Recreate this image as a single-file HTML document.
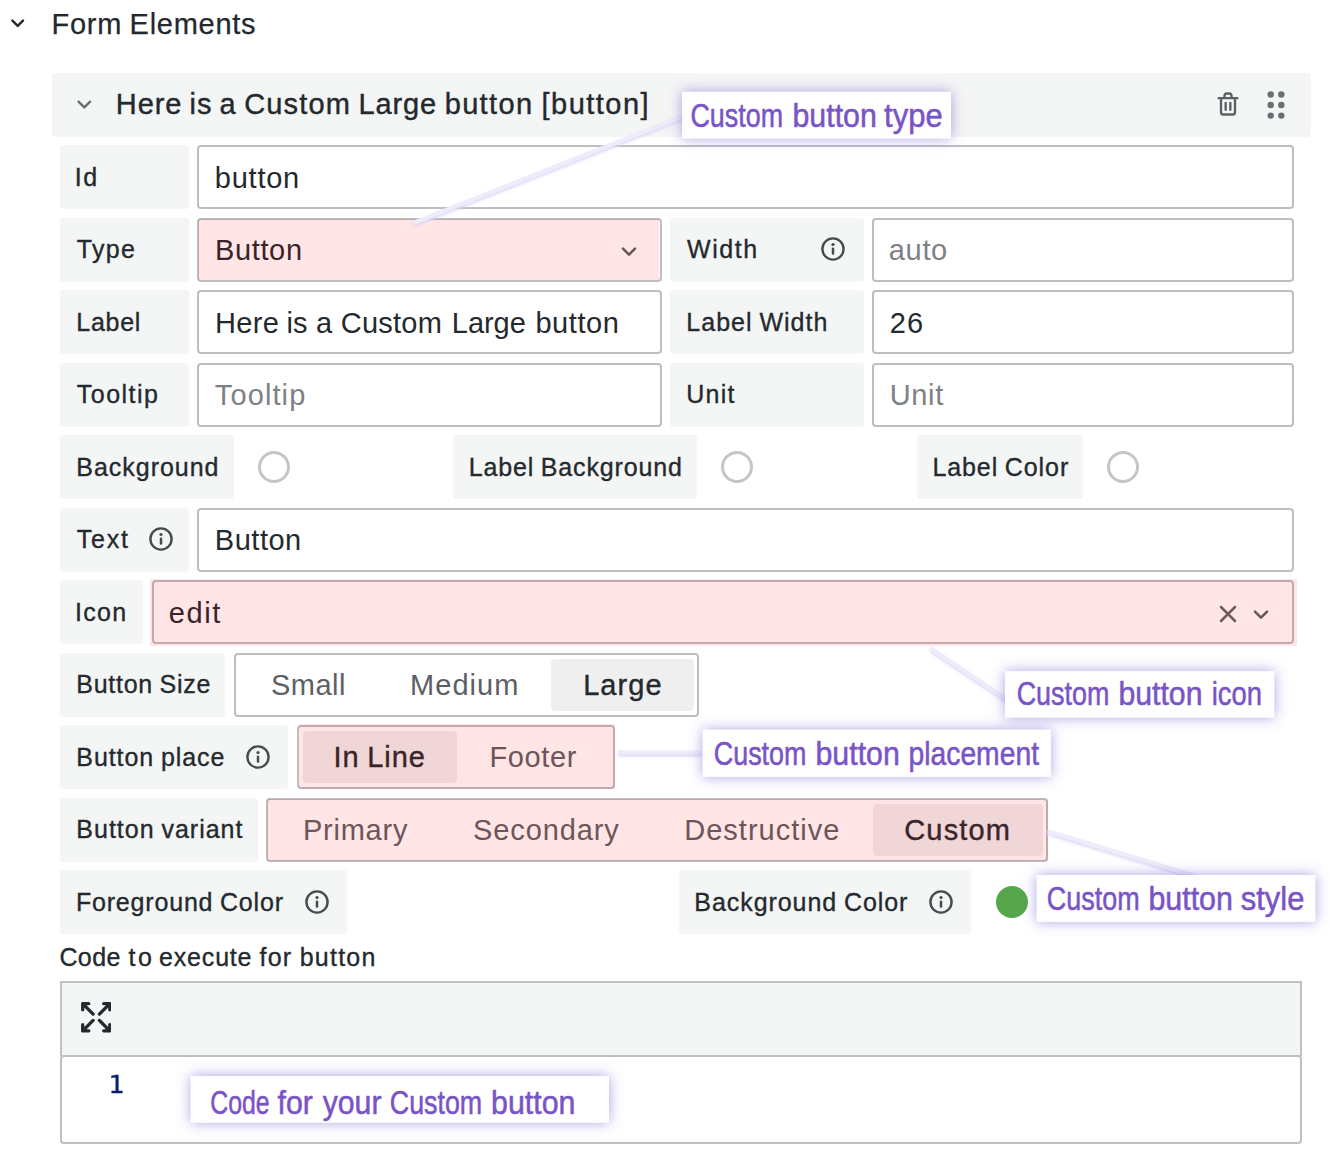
<!DOCTYPE html>
<html lang="en"><head><meta charset="utf-8"><title>Form Elements</title>
<style>
html,body{margin:0;padding:0;background:#fff}
#root{position:relative;width:1330px;height:1152px;overflow:hidden;background:#fff;font-family:'Liberation Sans',sans-serif;color:#24292e}
.abs{position:absolute}
.h1,.h2{font-size:29px;white-space:pre;-webkit-text-stroke:0.25px #24292e}
.h2{-webkit-text-stroke:0.4px #24292e}
.panel{position:absolute;left:52px;top:72.6px;width:1258.5px;height:64px;background:#f4f5f5;border-radius:4px}
.lbl{position:absolute;height:64.2px;background:#f4f5f5;border-radius:4px;font-size:25px}
.lbl .t,.codelbl{-webkit-text-stroke:0.34px #24292e}
.codelbl{font-size:25px;white-space:pre}
.t{position:absolute;top:0;height:100%;display:flex;align-items:center;white-space:pre}
.lbl .t{padding-top:0px;box-sizing:border-box}
.info{position:absolute;top:50%;margin-top:-14.6px}
.inp,.rg{position:absolute;height:64.2px;box-sizing:border-box;border:2px solid #bcbec0;border-radius:4px;background:#fff;font-size:29px}
.inp .t{padding-top:2px;box-sizing:border-box}
.rg .t{padding-top:1px;box-sizing:border-box}
.ph{color:#7d8186}
.ic{position:absolute}
.rg .t{color:#5c6064}
.rg .t.on{color:#24292e;-webkit-text-stroke:0.38px #24292e}
.sel{position:absolute;top:4px;bottom:4px;background:#efefef;border-radius:4px}
.ring{position:absolute;width:32px;height:32px;box-sizing:border-box;border:3.5px solid #c4c5c7;border-radius:50%;background:#fff}
.dot{position:absolute;width:32px;height:32px;border-radius:50%;background:#56a64b}
.pink{position:absolute;background:rgba(255,0,0,0.10)}
.tb{box-sizing:border-box;border:2px solid #c0c2c3;border-bottom:none;background:#f4f5f5}
.ed{box-sizing:border-box;border:2px solid #bdbfc1;border-radius:4px;background:#fff}
.ln{font-family:'DejaVu Sans Mono','Liberation Mono',monospace;font-size:24px;line-height:34px;color:#0b216f;-webkit-text-stroke:0.3px #0b216f;transform:scaleX(1.1);transform-origin:50% 50%}
</style></head>
<body><div id="root">

<svg class="abs" style="left:9px;top:14px" width="18" height="18" viewBox="0 0 18 18"><path d="M3.4 6.6 L8.7 11.9 L14 6.6" fill="none" stroke="#24292e" stroke-width="2.4" stroke-linecap="round" stroke-linejoin="round"/></svg>
<div class="abs h1" style="left:51.5px;top:0px;height:48px;line-height:48px;letter-spacing:0.73px;word-spacing:-1.30px">Form Elements</div>
<div class="panel">
<svg class="abs" style="left:23px;top:22.5px" width="20" height="20" viewBox="0 0 20 20"><path d="M3.5 6.7 L9.3 12.4 L15.1 6.7" fill="none" stroke="#6a6e73" stroke-width="2.4" stroke-linecap="round" stroke-linejoin="round"/></svg>
<div class="abs" style="left:0;top:0;height:64px"><span class="abs h2" style="left:63.8px;top:0;height:64px;line-height:63px;letter-spacing:0.90px">Here</span> <span class="abs h2" style="left:137.5px;top:0;height:64px;line-height:63px;letter-spacing:1.01px">is</span> <span class="abs h2" style="left:167.6px;top:0;height:64px;line-height:63px;letter-spacing:0.42px">a</span> <span class="abs h2" style="left:192.2px;top:0;height:64px;line-height:63px;letter-spacing:1.15px">Custom</span> <span class="abs h2" style="left:306.5px;top:0;height:64px;line-height:63px;letter-spacing:0.85px">Large</span> <span class="abs h2" style="left:392.7px;top:0;height:64px;line-height:63px;letter-spacing:1.34px">button</span> <span class="abs h2" style="left:489.6px;top:0;height:64px;line-height:63px;letter-spacing:1.47px">[button]</span></div>
<svg class="abs" style="left:1161.9px;top:17.5px" width="28" height="28" viewBox="0 0 24 24"><path fill="#5d6166" d="M10,18a1,1,0,0,0,1-1V11a1,1,0,0,0-2,0v6A1,1,0,0,0,10,18ZM20,6H16V5a3,3,0,0,0-3-3H11A3,3,0,0,0,8,5V6H4A1,1,0,0,0,4,8H5V19a3,3,0,0,0,3,3h8a3,3,0,0,0,3-3V8h1a1,1,0,0,0,0-2ZM10,5a1,1,0,0,1,1-1h2a1,1,0,0,1,1,1V6H10Zm7,14a1,1,0,0,1-1,1H8a1,1,0,0,1-1-1V8H17Zm-3-1a1,1,0,0,0,1-1V11a1,1,0,0,0-2,0v6A1,1,0,0,0,14,18Z"/></svg>
<svg class="abs" style="left:1205.8px;top:14.3px" width="36" height="36" viewBox="0 0 36 36"><g fill="#6b6f74"><circle cx="12.7" cy="7.5" r="3.2"/><circle cx="23.3" cy="7.5" r="3.2"/><circle cx="12.7" cy="18" r="3.2"/><circle cx="23.3" cy="18" r="3.2"/><circle cx="12.7" cy="28.6" r="3.2"/><circle cx="23.3" cy="28.6" r="3.2"/></g></svg>
</div>
<div class="lbl" style="left:60px;top:145.2px;width:128.6px"><span class="t" style="left:14.7px;letter-spacing:1.57px">Id</span></div>
<div class="inp" style="left:197px;top:145.2px;width:1097px"><span class="t" style="left:15.8px;letter-spacing:0.76px">button</span></div>
<div class="lbl" style="left:60px;top:217.7px;width:128.6px"><span class="t" style="left:16.8px;letter-spacing:1.31px">Type</span></div>
<div class="inp" style="left:197px;top:217.7px;width:464.7px"><span class="t" style="left:15.9px;letter-spacing:0.66px">Button</span><svg class="ic" style="left:420.1px;top:50%;margin-top:-5.7px" width="20" height="16" viewBox="0 0 20 16"><path d="M4 4.6 L10 10.6 L16 4.6" fill="none" stroke="#5a5e63" stroke-width="2.5" stroke-linecap="round" stroke-linejoin="round"/></svg></div>
<div class="lbl" style="left:670.4px;top:217.7px;width:193.5px"><span class="t" style="left:16.7px;letter-spacing:1.55px">Width</span><svg class="info" style="left:148.6px" width="28" height="28" viewBox="0 0 28 28"><circle cx="14" cy="14" r="10.6" fill="none" stroke="#474b50" stroke-width="2.4"/><circle cx="14" cy="9.5" r="1.6" fill="#474b50"/><rect x="12.75" y="12.5" width="2.5" height="7.2" rx="1.2" fill="#474b50"/></svg></div>
<div class="inp ph" style="left:872.1px;top:217.7px;width:421.9px"><span class="t" style="left:14.7px;letter-spacing:0.67px">auto</span></div>
<div class="lbl" style="left:60px;top:290.2px;width:128.6px"><span class="t" style="left:16.3px;letter-spacing:0.74px">Label</span></div>
<div class="inp" style="left:197px;top:290.2px;width:464.7px"><span class="t" style="left:16.0px;letter-spacing:0.30px">Here</span> <span class="t" style="left:87.5px;letter-spacing:0.01px">is</span> <span class="t" style="left:117.0px;letter-spacing:-0.18px">a</span> <span class="t" style="left:141.8px;letter-spacing:0.23px">Custom</span> <span class="t" style="left:252.8px;letter-spacing:-0.05px">Large</span> <span class="t" style="left:336.4px;letter-spacing:0.56px">button</span></div>
<div class="lbl" style="left:670.4px;top:290.2px;width:193.5px"><span class="t" style="left:15.9px;letter-spacing:1.02px;word-spacing:-1.12px">Label Width</span></div>
<div class="inp" style="left:872.1px;top:290.2px;width:421.9px"><span class="t" style="left:15.7px;letter-spacing:1.20px">26</span></div>
<div class="lbl" style="left:60px;top:362.7px;width:128.6px"><span class="t" style="left:16.8px;letter-spacing:1.48px">Tooltip</span></div>
<div class="inp ph" style="left:197px;top:362.7px;width:464.7px"><span class="t" style="left:15.8px;letter-spacing:1.11px">Tooltip</span></div>
<div class="lbl" style="left:670.4px;top:362.7px;width:193.5px"><span class="t" style="left:15.9px;letter-spacing:1.22px">Unit</span></div>
<div class="inp ph" style="left:872.1px;top:362.7px;width:421.9px"><span class="t" style="left:15.7px;letter-spacing:0.63px">Unit</span></div>
<div class="lbl" style="left:60px;top:435.2px;width:173.5px"><span class="t" style="left:16.3px;letter-spacing:0.97px">Background</span></div>
<div class="ring" style="left:258px;top:451.3px"></div>
<div class="lbl" style="left:452.6px;top:435.2px;width:244.7px"><span class="t" style="left:16.2px;letter-spacing:0.84px;word-spacing:-1.12px">Label Background</span></div>
<div class="ring" style="left:721.4px;top:451.3px"></div>
<div class="lbl" style="left:916.7px;top:435.2px;width:166.4px"><span class="t" style="left:15.7px;letter-spacing:0.91px;word-spacing:-1.12px">Label Color</span></div>
<div class="ring" style="left:1107px;top:451.3px"></div>
<div class="lbl" style="left:60px;top:507.7px;width:128.6px"><span class="t" style="left:16.8px;letter-spacing:1.76px">Text</span><svg class="info" style="left:86.9px" width="28" height="28" viewBox="0 0 28 28"><circle cx="14" cy="14" r="10.6" fill="none" stroke="#474b50" stroke-width="2.4"/><circle cx="14" cy="9.5" r="1.6" fill="#474b50"/><rect x="12.75" y="12.5" width="2.5" height="7.2" rx="1.2" fill="#474b50"/></svg></div>
<div class="inp" style="left:197px;top:507.7px;width:1097px"><span class="t" style="left:15.8px;letter-spacing:0.52px">Button</span></div>
<div class="lbl" style="left:60px;top:580.2px;width:83px"><span class="t" style="left:15.0px;letter-spacing:1.29px">Icon</span></div>
<div class="inp" style="left:151.7px;top:580.2px;width:1142.6px"><span class="t" style="left:15.1px;letter-spacing:1.57px">edit</span><svg class="ic" style="left:1064.6px;top:50%;margin-top:-8.2px" width="20" height="20" viewBox="0 0 20 20"><path d="M3 3 L17 17 M17 3 L3 17" fill="none" stroke="#60646a" stroke-width="2.5" stroke-linecap="round"/></svg><svg class="ic" style="left:1097.6px;top:50%;margin-top:-5.7px" width="20" height="16" viewBox="0 0 20 16"><path d="M4 4.6 L10 10.6 L16 4.6" fill="none" stroke="#5a5e63" stroke-width="2.5" stroke-linecap="round" stroke-linejoin="round"/></svg></div>
<div class="lbl" style="left:60px;top:652.7px;width:165px"><span class="t" style="left:16.3px;letter-spacing:0.74px;word-spacing:-1.12px">Button Size</span></div>
<div class="rg" style="left:234px;top:652.7px;width:465.4px"><span class="t" style="left:35px;letter-spacing:0.49px">Small</span><span class="t" style="left:174px;letter-spacing:1.06px">Medium</span><div class="sel" style="left:315.2px;width:142.6px"></div><span class="t on" style="left:347.2px;letter-spacing:1.05px">Large</span></div>
<div class="lbl" style="left:60px;top:725.2px;width:228.2px"><span class="t" style="left:16.3px;letter-spacing:0.93px;word-spacing:-1.12px">Button place</span><svg class="info" style="left:184.3px" width="28" height="28" viewBox="0 0 28 28"><circle cx="14" cy="14" r="10.6" fill="none" stroke="#474b50" stroke-width="2.4"/><circle cx="14" cy="9.5" r="1.6" fill="#474b50"/><rect x="12.75" y="12.5" width="2.5" height="7.2" rx="1.2" fill="#474b50"/></svg></div>
<div class="rg" style="left:297.1px;top:725.2px;width:317.5px"><div class="sel" style="left:3.7px;width:154.4px"></div><span class="t on" style="left:34.4px;letter-spacing:0.93px;word-spacing:-1.30px">In Line</span><span class="t" style="left:190.3px;letter-spacing:0.65px">Footer</span></div>
<div class="lbl" style="left:60px;top:797.7px;width:197.8px"><span class="t" style="left:16.3px;letter-spacing:1.00px;word-spacing:-1.12px">Button variant</span></div>
<div class="rg" style="left:266.2px;top:797.7px;width:782.3px"><span class="t" style="left:34.8px;letter-spacing:0.76px">Primary</span><span class="t" style="left:204.8px;letter-spacing:0.90px">Secondary</span><span class="t" style="left:416.0px;letter-spacing:1.02px">Destructive</span><div class="sel" style="left:605.0px;width:169.5px"></div><span class="t on" style="left:636.1px;letter-spacing:1.15px">Custom</span></div>
<div class="lbl" style="left:60px;top:870.2px;width:286.7px"><span class="t" style="left:15.9px;letter-spacing:0.82px;word-spacing:-1.12px">Foreground Color</span><svg class="info" style="left:243.4px" width="28" height="28" viewBox="0 0 28 28"><circle cx="14" cy="14" r="10.6" fill="none" stroke="#474b50" stroke-width="2.4"/><circle cx="14" cy="9.5" r="1.6" fill="#474b50"/><rect x="12.75" y="12.5" width="2.5" height="7.2" rx="1.2" fill="#474b50"/></svg></div>
<div class="lbl" style="left:678.5px;top:870.2px;width:292.3px"><span class="t" style="left:15.8px;letter-spacing:0.94px;word-spacing:-1.12px">Background Color</span><svg class="info" style="left:248.8px" width="28" height="28" viewBox="0 0 28 28"><circle cx="14" cy="14" r="10.6" fill="none" stroke="#474b50" stroke-width="2.4"/><circle cx="14" cy="9.5" r="1.6" fill="#474b50"/><rect x="12.75" y="12.5" width="2.5" height="7.2" rx="1.2" fill="#474b50"/></svg></div>
<div class="dot" style="left:995.5px;top:886px"></div>
<div class="pink" style="left:197.6px;top:219.3px;width:461.8px;height:61.1px"></div>
<div class="pink" style="left:150px;top:579px;width:1147px;height:67px"></div>
<div class="pink" style="left:299px;top:723.8px;width:315.8px;height:65.5px"></div>
<div class="pink" style="left:267px;top:799px;width:781px;height:62px"></div>
<div class="abs" style="left:0;top:940px;height:34px"><span class="abs codelbl" style="left:59.4px;top:0;height:34px;line-height:34px;letter-spacing:0.39px">Code</span> <span class="abs codelbl" style="left:128.5px;top:0;height:34px;line-height:34px;letter-spacing:2.47px">to</span> <span class="abs codelbl" style="left:159.1px;top:0;height:34px;line-height:34px;letter-spacing:0.81px">execute</span> <span class="abs codelbl" style="left:259.6px;top:0;height:34px;line-height:34px;letter-spacing:1.17px">for</span> <span class="abs codelbl" style="left:299.7px;top:0;height:34px;line-height:34px;letter-spacing:1.24px">button</span></div>
<div class="abs tb" style="left:60.4px;top:981.4px;width:1241.6px;height:74.5px">
<svg class="abs" style="left:18.2px;top:18.8px" width="30.5" height="30.5" viewBox="0 0 30.5 30.5"><g fill="none" stroke="#24292e" stroke-width="3.3" stroke-linecap="round" stroke-linejoin="round"><path d="M7.8 1.7 H1.7 V7.8 M1.7 1.7 L12.1 12.1"/><path d="M22.7 1.7 H28.8 V7.8 M28.8 1.7 L18.4 12.1"/><path d="M1.7 22.7 V28.8 H7.8 M1.7 28.8 L12.1 18.4"/><path d="M28.8 22.7 V28.8 H22.7 M28.8 28.8 L18.4 18.4"/></g></svg>
</div>
<div class="abs ed" style="left:60.4px;top:1055.2px;width:1241.6px;height:88.6px">
<span class="abs ln" style="left:47px;top:10.6px">1</span>
</div>
<svg class="abs" style="left:0;top:0" width="1330" height="1152" viewBox="0 0 1330 1152" font-family="'Liberation Sans', sans-serif" font-size="33.5" fill="#7954c6">
<defs><filter id="glow" x="-25%" y="-100%" width="150%" height="300%"><feGaussianBlur in="SourceAlpha" stdDeviation="7" result="b0"/><feComponentTransfer in="b0" result="b"><feFuncA type="linear" slope="1.0"/></feComponentTransfer><feFlood flood-color="#7a60d0" flood-opacity="0.6"/><feComposite in2="b" operator="in" result="g"/><feMerge><feMergeNode in="g"/><feMergeNode in="SourceGraphic"/></feMerge></filter>
<filter id="lg" x="-10%" y="-10%" width="120%" height="120%"><feGaussianBlur stdDeviation="1.6"/></filter></defs>
<g stroke="#dcd6f4" stroke-width="4.2" stroke-linecap="round" filter="url(#lg)" fill="none" transform="translate(0,1.8)"><path d="M682 116.7 L415.3 222.2"/><path d="M931.8 649.2 L1004.7 697.8"/><path d="M619.5 752.5 L700 752.5"/><path d="M1049.5 831.8 L1194.5 875.8"/></g>
<g stroke="#eeebfa" stroke-width="4.2" stroke-linecap="round" fill="none"><path d="M682 116.7 L415.3 222.2"/><path d="M931.8 649.2 L1004.7 697.8"/><path d="M619.5 752.5 L700 752.5"/><path d="M1049.5 831.8 L1194.5 875.8"/></g>
<rect x="682.1" y="91.9" width="268.9" height="46.6" fill="#fff" filter="url(#glow)"/><text stroke="#7954c6" stroke-width="0.55" stroke-linejoin="round" x="690.4" y="127" textLength="92.7" lengthAdjust="spacingAndGlyphs">Custom</text> <text stroke="#7954c6" stroke-width="0.55" stroke-linejoin="round" x="792.5" y="127" textLength="84.3" lengthAdjust="spacingAndGlyphs">button</text> <text stroke="#7954c6" stroke-width="0.55" stroke-linejoin="round" x="884.1" y="127" textLength="58.6" lengthAdjust="spacingAndGlyphs">type</text><rect x="1005" y="671.2" width="269.2" height="46.4" fill="#fff" filter="url(#glow)"/><text stroke="#7954c6" stroke-width="0.55" stroke-linejoin="round" x="1016.7" y="705.3" textLength="92.7" lengthAdjust="spacingAndGlyphs">Custom</text> <text stroke="#7954c6" stroke-width="0.55" stroke-linejoin="round" x="1118.4" y="705.3" textLength="84.1" lengthAdjust="spacingAndGlyphs">button</text> <text stroke="#7954c6" stroke-width="0.55" stroke-linejoin="round" x="1211.7" y="705.3" textLength="50.3" lengthAdjust="spacingAndGlyphs">icon</text><rect x="702.8" y="729.8" width="348.0" height="47.0" fill="#fff" filter="url(#glow)"/><text stroke="#7954c6" stroke-width="0.55" stroke-linejoin="round" x="713.8" y="764.5" textLength="92.6" lengthAdjust="spacingAndGlyphs">Custom</text> <text stroke="#7954c6" stroke-width="0.55" stroke-linejoin="round" x="815.5" y="764.5" textLength="84.3" lengthAdjust="spacingAndGlyphs">button</text> <text stroke="#7954c6" stroke-width="0.55" stroke-linejoin="round" x="908.5" y="764.5" textLength="130.5" lengthAdjust="spacingAndGlyphs">placement</text><rect x="1036.8" y="875" width="278.4" height="46.8" fill="#fff" filter="url(#glow)"/><text stroke="#7954c6" stroke-width="0.55" stroke-linejoin="round" x="1046.8" y="909.8" textLength="92.9" lengthAdjust="spacingAndGlyphs">Custom</text> <text stroke="#7954c6" stroke-width="0.55" stroke-linejoin="round" x="1148.4" y="909.8" textLength="84.5" lengthAdjust="spacingAndGlyphs">button</text> <text stroke="#7954c6" stroke-width="0.55" stroke-linejoin="round" x="1240.8" y="909.8" textLength="63.6" lengthAdjust="spacingAndGlyphs">style</text><rect x="190.8" y="1076" width="418.2" height="46.7" fill="#fff" filter="url(#glow)"/><text stroke="#7954c6" stroke-width="0.55" stroke-linejoin="round" x="210.2" y="1113.6" textLength="59.4" lengthAdjust="spacingAndGlyphs">Code</text> <text stroke="#7954c6" stroke-width="0.55" stroke-linejoin="round" x="277.6" y="1113.6" textLength="35.3" lengthAdjust="spacingAndGlyphs">for</text> <text stroke="#7954c6" stroke-width="0.55" stroke-linejoin="round" x="322.7" y="1113.6" textLength="58.8" lengthAdjust="spacingAndGlyphs">your</text> <text stroke="#7954c6" stroke-width="0.55" stroke-linejoin="round" x="389.8" y="1113.6" textLength="92.4" lengthAdjust="spacingAndGlyphs">Custom</text> <text stroke="#7954c6" stroke-width="0.55" stroke-linejoin="round" x="491.1" y="1113.6" textLength="84.3" lengthAdjust="spacingAndGlyphs">button</text></svg>
</div></body></html>
